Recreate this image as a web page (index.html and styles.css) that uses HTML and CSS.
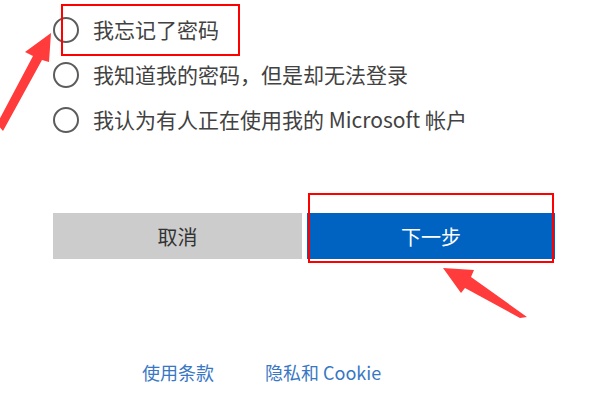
FILE: index.html
```html
<!DOCTYPE html>
<html lang="zh-CN">
<head>
    <meta charset="UTF-8">
    <meta name="viewport" content="width=device-width, initial-scale=1.0">
    <title>恢复你的帐户</title>
    <link rel="stylesheet" href="styles.css">
</head>
<body>
    <div class="page">
        <div class="options">
            <label class="option">
                <input type="radio" name="reason" class="radio">
                <span class="option-text">我忘记了密码</span>
            </label>
            <label class="option">
                <input type="radio" name="reason" class="radio">
                <span class="option-text">我知道我的密码，但是却无法登录</span>
            </label>
            <label class="option">
                <input type="radio" name="reason" class="radio">
                <span class="option-text">我认为有人正在使用我的 Microsoft 帐户</span>
            </label>
        </div>

        <div class="buttons">
            <button class="button cancel">取消</button>
            <button class="button next">下一步</button>
        </div>

        <div class="footer">
            <a href="#" class="link">使用条款</a>
            <a href="#" class="link">隐私和 Cookie</a>
        </div>
    </div>

    <!-- annotations drawn over the page -->
    <div class="mark mark-option"></div>
    <div class="mark mark-next"></div>
    <svg class="arrows" width="600" height="400" viewBox="0 0 600 400">
        <polygon points="51,33 25,52 33,56 -3,124 3,131 42,60 49,62" fill="#ff3b3b"/>
        <polygon points="443,268 474,270 471,277 527,317 520,318 465,288 461,293" fill="#ff3b3b"/>
    </svg>
</body>
</html>
```

FILE: styles.css
```css
body {
    font-family: "Noto Sans CJK SC", "Noto Sans", sans-serif;
    background-color: #fff;
    color: #444;
    margin: 0;
    padding: 0;
    width: 600px;
    height: 400px;
    overflow: hidden;
    position: relative;
}

.page {
    padding: 7px 45px 0 53px;
}

.options {
    display: flex;
    flex-direction: column;
}

.option {
    height: 45px;
    display: flex;
    align-items: center;
    gap: 14px;
    cursor: pointer;
}

.radio {
    appearance: none;
    width: 26px;
    height: 26px;
    margin: 0;
    border: 2.5px solid #5c5c5c;
    border-radius: 50%;
    box-sizing: border-box;
    flex-shrink: 0;
}

.option-text {
    font-size: 21px;
    line-height: 1;
    color: #424242;
}

.buttons {
    display: grid;
    grid-template-columns: 249px 248px;
    gap: 5px;
    margin-top: 71px;
}

.button {
    height: 46px;
    border: none;
    font-family: inherit;
    font-size: 20px;
    cursor: pointer;
}

.cancel {
    background: #cccccc;
    color: #333;
}

.next {
    background: #0063c1;
    color: #fff;
}

.footer {
    display: flex;
    gap: 51px;
    margin-top: 103px;
    padding-left: 89px;
    line-height: 20px;
}

.link {
    font-size: 18px;
    color: #3877c4;
    text-decoration: none;
}

.mark {
    position: absolute;
    border: 2px solid #f00;
    box-sizing: border-box;
    pointer-events: none;
}

.mark-option {
    left: 61px;
    top: 4px;
    width: 179px;
    height: 52px;
}

.mark-next {
    left: 308px;
    top: 193px;
    width: 246px;
    height: 70px;
}

.arrows {
    position: absolute;
    left: 0;
    top: 0;
    pointer-events: none;
}
```
